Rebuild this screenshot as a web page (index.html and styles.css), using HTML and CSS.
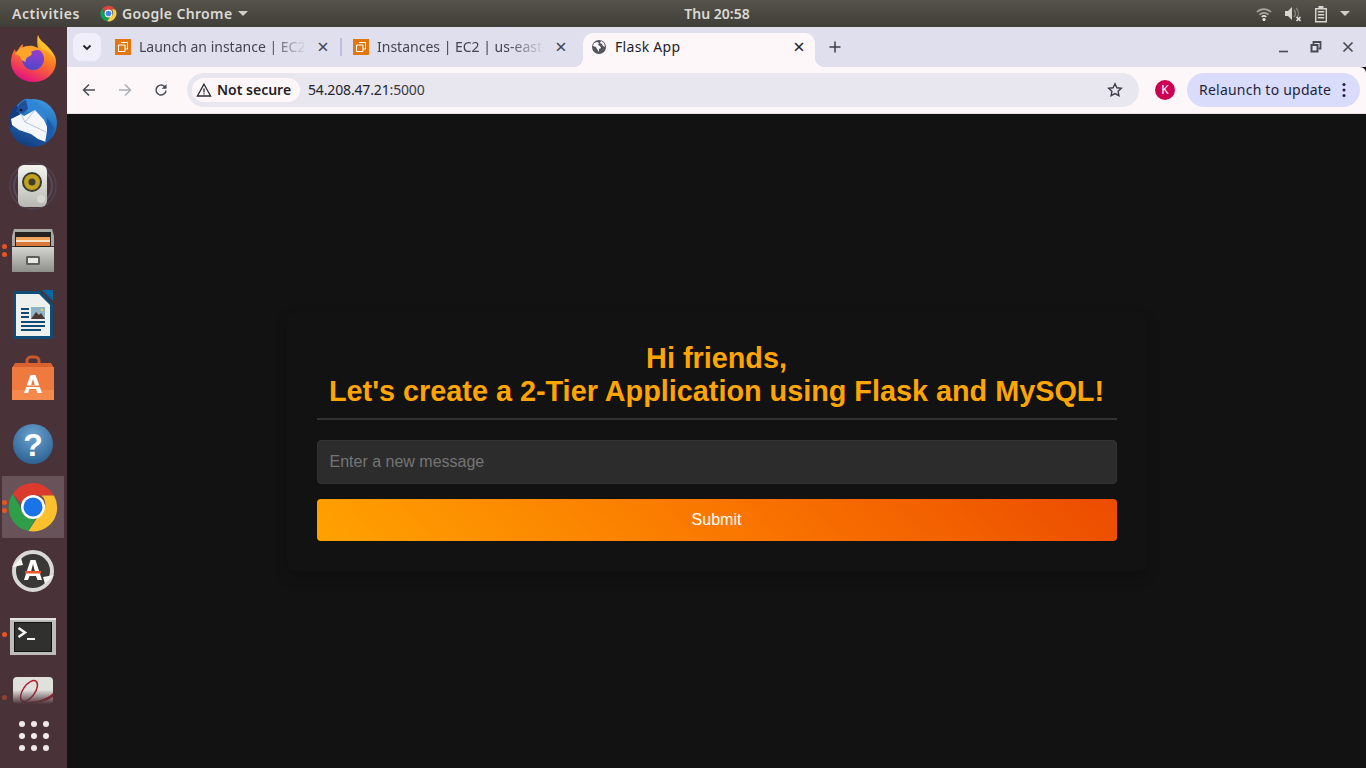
FILE: index.html
```html
<!DOCTYPE html>
<html lang="en">
<head>
    <meta charset="UTF-8">
    <title>Flask App</title>
    <link rel="stylesheet" href="styles.css">
</head>
<body>
<header class="topbar">
    <div class="topbar-left">
        <span class="activities">Activities</span>
        <span class="app-menu">
            <svg class="app-icon" viewBox="0 0 48 48" width="17" height="17">
                <path fill="#db4437" d="M24 2a22 22 0 0 1 19 11H24a11 11 0 0 0-10.500 7.500L6.500 10A22 22 0 0 1 24 2z"/>
                <path fill="#0f9d58" d="M6.500 10l9.500 19a11 11 0 0 0 11 5.500L20 46A22 22 0 0 1 6.500 10z"/>
                <path fill="#ffcd40" d="M43 13a22 22 0 0 1-23 33l9-13a11 11 0 0 0 3-20z"/>
                <circle cx="24" cy="24" r="11" fill="#fff"/>
                <circle cx="24" cy="24" r="8" fill="#4285f4"/>
            </svg>
            <span class="app-name">Google Chrome</span>
            <i class="caret"></i>
        </span>
    </div>
    <div class="clock">Thu 20:58</div>
    <div class="tray">
        <svg viewBox="0 0 16 16" width="16" height="16"><path fill="none" stroke="#a8a69f" stroke-width="1.700" d="M1 6a10 10 0 0 1 14 0M3.500 8.700a6.500 6.500 0 0 1 9 0"/><path fill="none" stroke="#e0ded8" stroke-width="1.700" d="M5.800 11a3.200 3.200 0 0 1 4.400 0"/><circle cx="8" cy="13.500" r="1.600" fill="#e8e6e0"/></svg>
        <svg viewBox="0 0 18 16" width="18" height="16"><path fill="#d8d6d0" d="M1 5h3l4-4v13l-4-4H1z"/><path fill="none" stroke="#8c8a84" stroke-width="1.200" d="M10 4a5 5 0 0 1 0 7M12 2a8 8 0 0 1 1 10"/><path stroke="#e8e6e0" stroke-width="1.500" d="M12.500 11l4 4m0-4l-4 4"/></svg>
        <svg viewBox="0 0 14 18" width="14" height="18"><path fill="none" stroke="#d8d6d0" stroke-width="1.400" d="M1.700 3.700h10.600v13H1.700z"/><path fill="#d8d6d0" d="M4.500 1h5v2.500h-5zM3.800 6h6.400v1.500H3.800zM3.800 9h6.400v1.500H3.800zM3.800 12h6.400v1.500H3.800z"/></svg>
        <i class="caret"></i>
    </div>
</header>

<div class="desktop">
    <nav class="dock">
        <div class="dock-item">
            <svg viewBox="0 0 67 62" width="67" height="62">
                <defs>
                    <linearGradient id="ffBody" x1="0.800" y1="0.100" x2="0.400" y2="1">
                        <stop offset="0" stop-color="#ffc82c"/>
                        <stop offset="0.450" stop-color="#ff7a22"/>
                        <stop offset="1" stop-color="#e5137f"/>
                    </linearGradient>
                    <linearGradient id="ffGlobe" x1="0.600" y1="0" x2="0.400" y2="1">
                        <stop offset="0" stop-color="#a03ccc"/>
                        <stop offset="1" stop-color="#4c47c8"/>
                    </linearGradient>
                </defs>
                <path fill="url(#ffBody)" d="M38 8c1 5 5 7 9 11 5 5 9 10 9 16a22.500 20 0 0 1-45 0c0-5 1-9 4-13 0 2 1 3 2 4 1-4 3-7 6-9-1 3 0 5 2 6 4-3 9-3 13-1-1-5-1-10 0-14z"/>
                <path fill="#ffc02a" d="M38 8c1 5 5 7 9 11 5 5 8 10 9 15-3-6-8-10-14-12-3-4-5-9-4-14z"/>
                <circle cx="33" cy="32" r="11" fill="url(#ffGlobe)"/>
                <path fill="#ffa42b" d="M15 27c3-6 11-9 18-8 4 1 7 3 9 5-4-2-8-1-11 1 2 2 0 4-3 5-2 1-3 3-2 5-4-1-6-3-6-6-1 0-3-1-5-2z"/>
            </svg>
        </div>
        <div class="dock-item">
            <svg viewBox="0 0 67 62" width="67" height="62">
                <defs>
                    <linearGradient id="tbBlue" x1="0.700" y1="0" x2="0.300" y2="1">
                        <stop offset="0" stop-color="#3a98e0"/>
                        <stop offset="1" stop-color="#103a80"/>
                    </linearGradient>
                </defs>
                <circle cx="33" cy="32" r="24" fill="url(#tbBlue)"/>
                <path fill="#123c84" d="M9 32c0-8 3-14 8-18l3 12-10 12z"/>
                <path fill="#2f86d8" d="M18 15c2-5 7-8 11-7 6 1 11 6 14 12 3 5 4 10 3 14l-10-9-9-5z"/>
                <path fill="#1f4f9c" d="M18 16c1-3 4-6 8-7l2 9-5 4-7-1z"/>
                <circle cx="21" cy="19" r="1.300" fill="#111"/>
                <path fill="#f6f7fa" d="M11 28l10-5 3 2 11-6 9 10 5 11-3 11-8-3-7-5-12-4-7-5z"/>
                <path fill="none" stroke="#b8c4d8" stroke-width="1" d="M21 23l4 8 10-12M25 31l21 10"/>
                <path fill="#1a5db0" d="M47 27c3 3 6 7 7 11-1 6-5 11-9 14l2-12z"/>
            </svg>
        </div>
        <div class="dock-item">
            <svg viewBox="0 0 67 62" width="67" height="62">
                <defs>
                    <linearGradient id="rbBox" x1="0" y1="0" x2="0" y2="1">
                        <stop offset="0" stop-color="#f4f4f0"/>
                        <stop offset="1" stop-color="#b8b8b2"/>
                    </linearGradient>
                </defs>
                <circle cx="33" cy="31" r="23" fill="none" stroke="#5d6680" stroke-width="1.500" opacity="0.300"/>
                <circle cx="33" cy="31" r="19" fill="none" stroke="#5d6680" stroke-width="2" opacity="0.500"/>
                <rect x="18" y="10" width="29" height="42" rx="6" fill="url(#rbBox)"/>
                <circle cx="32" cy="27" r="10" fill="#3a3a34"/>
                <circle cx="32" cy="27" r="8" fill="#c0a21e"/>
                <circle cx="32" cy="27" r="3.500" fill="#3f3d30"/>
                <circle cx="41" cy="44" r="4" fill="#d8d8d2"/>
                <circle cx="26" cy="44" r="1.500" fill="#c4c4be"/>
            </svg>
        </div>
        <div class="dock-item">
            <svg viewBox="0 0 67 62" width="67" height="62">
                <defs>
                    <linearGradient id="fcBox" x1="0" y1="0" x2="0" y2="1">
                        <stop offset="0" stop-color="#d4d4d0"/>
                        <stop offset="1" stop-color="#8e8e8a"/>
                    </linearGradient>
                </defs>
                <path fill="#a8a8a4" d="M14 9h38l2 7v10H12V16z"/>
                <rect x="15" y="12" width="36" height="17" fill="#25221f"/>
                <rect x="16" y="17" width="34" height="3" fill="#f2a45e"/>
                <rect x="16" y="20" width="34" height="2" fill="#f7e3c8"/>
                <rect x="16" y="22" width="34" height="4" fill="#d87a3c"/>
                <rect x="12" y="27" width="42" height="25" fill="url(#fcBox)"/>
                <rect x="26" y="36" width="14" height="9" rx="1.500" fill="#5d5d5a"/>
                <rect x="28" y="38" width="10" height="5" fill="#e8e8e4"/>
            </svg>
        </div>
        <div class="dock-item">
            <svg viewBox="0 0 67 62" width="67" height="62">
                <path fill="#0f4c75" d="M15 7h25l13 13v33a2 2 0 0 1-2 2H15a2 2 0 0 1-2-2V9a2 2 0 0 1 2-2z"/>
                <path fill="#0369a3" d="M42 6h11v11z"/>
                <path fill="#eef0ee" d="M16 10h23l11 11v31H16z"/>
                <path fill="#0f4c75" d="M21 24h8v2h-8zM21 28h8v2h-8zM21 32h8v2h-8zM21 37h24v2H21zM21 41h24v2H21zM21 45h20v2H21z"/>
                <rect x="31" y="23" width="14" height="12" fill="#8fb4c8"/>
                <path fill="#4a3a32" d="M31 35l5-7 3 3 2-2 4 6z"/>
                <circle cx="42" cy="26" r="1.300" fill="#f2d04a"/>
            </svg>
        </div>
        <div class="dock-item">
            <svg viewBox="0 0 67 62" width="67" height="62">
                <path fill="none" stroke="#c9582c" stroke-width="3" d="M27 19v-6a4 4 0 0 1 4-4h4a4 4 0 0 1 4 4v6"/>
                <path fill="#d9622f" d="M15 15h36l3 5H12z"/>
                <rect x="12" y="19" width="42" height="23" fill="#ef7a3f"/>
                <rect x="12" y="42" width="42" height="10" fill="#f68a4c"/>
                <path fill="#fff" d="M30.500 27h5l6.500 18h-4.500l-1.500-4h-6.500l-1.500 4H24zm2.500 4l-1.800 6h3.600z"/>
                <rect x="24" y="37.500" width="18" height="1.500" fill="#ef7a3f"/>
            </svg>
        </div>
        <div class="dock-item">
            <svg viewBox="0 0 67 62" width="67" height="62">
                <defs>
                    <radialGradient id="helpBall" cx="0.500" cy="0.300" r="0.800">
                        <stop offset="0" stop-color="#6da3d0"/>
                        <stop offset="1" stop-color="#245a8c"/>
                    </radialGradient>
                </defs>
                <circle cx="33" cy="32" r="20" fill="url(#helpBall)"/>
                <text class="help-mark" x="33" y="44" text-anchor="middle">?</text>
            </svg>
        </div>
        <div class="dock-item active">
            <svg viewBox="0 0 67 62" width="67" height="62">
                <path fill="#db3a2f" d="M33 7a24 24 0 0 1 21 12.500H33a11.500 11.500 0 0 0-11 8.500L12.700 18A24 24 0 0 1 33 7z"/>
                <path fill="#2f9e48" d="M12.700 18l10.600 18a11.500 11.500 0 0 0 12 6.800L28.500 55A24 24 0 0 1 12.700 18z"/>
                <path fill="#fbc02d" d="M54 19.500A24 24 0 0 1 28.500 55l11-17a11.500 11.500 0 0 0 2-18.500z"/>
                <circle cx="33" cy="31" r="12" fill="#fff"/>
                <circle cx="33" cy="31" r="9.500" fill="#1a73e8"/>
            </svg>
        </div>
        <div class="dock-item">
            <svg viewBox="0 0 67 62" width="67" height="62">
                <circle cx="33" cy="30" r="19" fill="#3a3836" stroke="#d8d8d4" stroke-width="4"/>
                <path fill="#f4f4f0" d="M12 26l9-9 2 7zM54 34l-9 9-2-7z"/>
                <path fill="#fff" d="M30.500 19h5l6.500 20h-4.500l-1.500-4h-6.500l-1.500 4H24zm2.500 4l-1.800 7h3.600z"/>
                <rect x="25" y="30" width="16" height="2.500" fill="#e8552a"/>
            </svg>
        </div>
        <div class="dock-item">
            <svg viewBox="0 0 67 62" width="67" height="62">
                <rect x="10" y="13" width="46" height="37" fill="#bcbcb8"/>
                <rect x="10" y="13" width="46" height="2" fill="#e4e4e0"/>
                <rect x="14" y="17" width="38" height="30" fill="#111"/>
                <rect x="15" y="18" width="36" height="28" fill="#30302e"/>
                <path fill="none" stroke="#f2f2f0" stroke-width="2.500" d="M18.500 23l6.500 4.500-6.500 4.500"/>
                <rect x="27" y="33" width="8" height="2" fill="#f2f2f0"/>
            </svg>
        </div>
        <div class="dock-item dock-fade">
            <svg viewBox="0 0 67 35" width="67" height="35">
                <rect x="13" y="8" width="40" height="27" rx="4" fill="#e0e0dc"/>
                <ellipse cx="29" cy="22" rx="6" ry="12" transform="rotate(35 29 22)" fill="none" stroke="#b3202c" stroke-width="1.500"/>
                <path fill="#b3202c" d="M21 33c12 1 25-2 32-9v4c-7 5-18 7-32 6z"/>
            </svg>
        </div>
        <div class="dock-apps">
            <i></i><i></i><i></i><i></i><i></i><i></i><i></i><i></i><i></i>
        </div>
        <b class="run-dot dot-files1"></b>
        <b class="run-dot dot-files2"></b>
        <b class="run-dot dot-chrome1"></b>
        <b class="run-dot dot-chrome2"></b>
        <b class="run-dot dot-term"></b>
        <b class="run-dot dot-last"></b>
    </nav>

    <main class="browser">
        <div class="tabstrip">
            <button class="tab-search">
                <svg viewBox="0 0 12 12" width="12" height="12"><path fill="none" stroke="#1f1f28" stroke-width="1.800" d="M2.500 4.500L6 8l3.500-3.500"/></svg>
            </button>
            <div class="tab">
                <svg class="aws" viewBox="0 0 16 16" width="16" height="16"><rect width="16" height="16" fill="#e2760f"/><path fill="none" stroke="#fff" stroke-width="1" d="M6 3.500h6.500V10H10M3.500 6H10v6.500H3.500z"/></svg>
                <span class="tab-title">Launch an instance | EC2</span>
                <span class="tab-x">×</span>
            </div>
            <i class="tab-sep"></i>
            <div class="tab">
                <svg class="aws" viewBox="0 0 16 16" width="16" height="16"><rect width="16" height="16" fill="#e2760f"/><path fill="none" stroke="#fff" stroke-width="1" d="M6 3.500h6.500V10H10M3.500 6H10v6.500H3.500z"/></svg>
                <span class="tab-title">Instances | EC2 | us-east-</span>
                <span class="tab-x">×</span>
            </div>
            <div class="tab tab-active">
                <svg viewBox="0 0 16 16" width="16" height="16"><circle cx="8" cy="8" r="7" fill="#55555e"/><path fill="#fdf7fa" d="M3 4l3-1 2 1-1 2 2 1 1 2-2 1v3L6 10 5 8 2 7zM10 2l3 2 1 4-2-1-1-2-2-1z"/></svg>
                <span class="tab-title">Flask App</span>
                <span class="tab-x">×</span>
            </div>
            <span class="tab-new">
                <svg viewBox="0 0 12 12" width="12" height="12"><path stroke="#3c3c46" stroke-width="1.500" d="M6 0.500v11M0.500 6h11"/></svg>
            </span>
            <div class="win-controls">
                <svg viewBox="0 0 12 12" width="12" height="12"><path stroke="#4a4a52" stroke-width="1.600" d="M1 10.500h9"/></svg>
                <svg viewBox="0 0 12 12" width="12" height="12"><path fill="none" stroke="#4a4a52" stroke-width="1.800" d="M3.500 3V1h7v6.500H8.500"/><path fill="none" stroke="#4a4a52" stroke-width="2" d="M1.500 4h6v6.500h-6z"/></svg>
                <svg viewBox="0 0 12 12" width="12" height="12"><path stroke="#4a4a52" stroke-width="1.700" d="M1.500 1.500l9 9m0-9l-9 9"/></svg>
            </div>
        </div>

        <div class="toolbar">
            <svg class="nav-icon" viewBox="0 0 16 16" width="16" height="16"><path fill="none" stroke="#4a4a52" stroke-width="1.500" d="M14 8H2.500M8 2.500L2.500 8 8 13.500"/></svg>
            <svg class="nav-icon" viewBox="0 0 16 16" width="16" height="16"><path fill="none" stroke="#adadb2" stroke-width="1.500" d="M2 8h11.500M8 2.500L13.500 8 8 13.500"/></svg>
            <svg class="nav-icon" viewBox="0 0 16 16" width="16" height="16"><path fill="none" stroke="#4a4a52" stroke-width="1.500" d="M13 8.500A5 5 0 1 1 11.500 4.500L13 6"/><path fill="#4a4a52" d="M13.500 2v4.800H8.700z"/></svg>
            <div class="omnibox">
                <div class="chip">
                    <svg viewBox="0 0 16 16" width="16" height="16"><path fill="none" stroke="#2a2a30" stroke-width="1.300" d="M8 2.200L14.600 14H1.400z"/><path stroke="#2a2a30" stroke-width="1.300" d="M8 6.500v4M8 11.300v1.300"/></svg>
                    <span class="chip-text">Not secure</span>
                </div>
                <span class="url">54.208.47.21<span class="url-port">:5000</span></span>
                <svg class="star" viewBox="0 0 16 16" width="16" height="16"><path fill="none" stroke="#3c3c46" stroke-width="1.400" d="M8 1.800l1.900 4 4.400.5-3.200 3 .8 4.400L8 11.600l-3.900 2.100.8-4.400-3.200-3 4.400-.5z"/></svg>
            </div>
            <span class="avatar">K</span>
            <div class="relaunch">
                <span class="relaunch-text">Relaunch to update</span>
                <svg viewBox="0 0 4 16" width="4" height="16"><circle cx="2" cy="2.500" r="1.500" fill="#1f1f3a"/><circle cx="2" cy="8" r="1.500" fill="#1f1f3a"/><circle cx="2" cy="13.500" r="1.500" fill="#1f1f3a"/></svg>
            </div>
        </div>

        <div class="page">
            <div class="card">
                <h1>Hi friends,<br>Let's create a 2-Tier Application using Flask and MySQL!</h1>
                <form class="msg-form">
                    <input type="text" placeholder="Enter a new message">
                    <button type="button">Submit</button>
                </form>
            </div>
        </div>
    </main>
</div>
</body>
</html>
```

FILE: styles.css
```css
* {
    box-sizing: border-box;
}
html, body {
    margin: 0;
    height: 768px;
    overflow: hidden;
}
body {
    font-family: "Noto Sans", sans-serif;
    background-color: #121212;
}
.caret {
    display: inline-block;
    width: 0;
    height: 0;
    border-left: 5px solid transparent;
    border-right: 5px solid transparent;
    border-top: 5px solid #d0cec8;
}

/* ubuntu top bar */
.topbar {
    height: 27px;
    background: linear-gradient(#56534b, #3f3e38);
    color: #dcdad4;
    font-size: 14px;
    font-weight: 600;
    display: flex;
    align-items: center;
    justify-content: space-between;
    padding: 0 16px 0 12px;
    position: relative;
}
.topbar-left {
    display: flex;
    align-items: center;
    gap: 20px;
}
.activities {
    letter-spacing: 0.55px;
}
.app-menu {
    display: flex;
    align-items: center;
    gap: 5px;
}
.app-name {
    letter-spacing: 0.35px;
}
.app-menu .caret {
    margin-left: 1px;
}
.clock {
    position: absolute;
    left: 0;
    width: 1434px;
    text-align: center;
}
.tray {
    display: flex;
    align-items: center;
    gap: 12px;
}

.desktop {
    display: flex;
    height: 741px;
}

/* dock */
.dock {
    width: 67px;
    flex-shrink: 0;
    background-color: #4a3239;
    display: flex;
    flex-direction: column;
    overflow: hidden;
    position: relative;
}
.dock-item {
    height: 64.2px;
    flex-shrink: 0;
}
.dock-item svg {
    display: block;
}
.dock-item.active svg {
    background: linear-gradient(to right, transparent 2px, rgba(255, 255, 255, 0.16) 2px, rgba(255, 255, 255, 0.16) 64px, transparent 64px);
    border-radius: 4px;
}
.help-mark {
    font-family: "Liberation Sans", sans-serif;
    font-size: 32px;
    font-weight: bold;
    fill: #fff;
}
.dock-fade {
    height: 35px;
    -webkit-mask-image: linear-gradient(#000 60%, transparent);
    mask-image: linear-gradient(#000 60%, transparent);
}
.dock-apps {
    height: 64px;
    padding: 16px 19px;
    display: grid;
    grid-template-columns: repeat(3, 6px);
    gap: 6px;
    justify-content: center;
    align-content: center;
}
.dock-apps i {
    width: 6px;
    height: 6px;
    border-radius: 50%;
    background-color: #eeeaec;
}
.run-dot {
    position: absolute;
    left: 2px;
    width: 5px;
    height: 5px;
    border-radius: 50%;
    background-color: #e95420;
}
.dot-files1 { top: 217px; }
.dot-files2 { top: 225px; }
.dot-chrome1 { top: 473px; }
.dot-chrome2 { top: 481px; }
.dot-term { top: 605px; }
.dot-last { top: 668px; opacity: 0.45; }

/* chrome */
.browser {
    flex: 1;
    display: flex;
    flex-direction: column;
    min-width: 0;
}
.tabstrip {
    height: 40px;
    background-color: #e0dfee;
    display: flex;
    align-items: flex-end;
    padding-left: 6px;
    font-size: 14px;
    color: #45454f;
}
.tab-search {
    width: 28px;
    height: 28px;
    margin-bottom: 6px;
    margin-right: 6px;
    padding: 0;
    border: none;
    border-radius: 8px;
    background-color: #f0eefb;
    display: flex;
    align-items: center;
    justify-content: center;
}
.tab {
    width: 232px;
    height: 34px;
    padding: 0 8px 6px;
    display: flex;
    align-items: center;
    gap: 8px;
    margin-right: 6px;
    flex-shrink: 0;
}
.tab svg {
    flex-shrink: 0;
}
.tab-sep {
    width: 2px;
    height: 18px;
    background-color: #bcc0dc;
    margin: 0 3px 11px -5px;
    flex-shrink: 0;
}
.tab-title {
    flex: 1;
    min-width: 0;
    white-space: nowrap;
    line-height: 16px;
    margin-top: -1px;
    -webkit-mask-image: linear-gradient(to right, #000 78%, transparent 100%);
    mask-image: linear-gradient(to right, #000 78%, transparent 100%);
}
.tab-x {
    width: 16px;
    text-align: center;
    font-size: 20px;
    line-height: 16px;
    color: #45454f;
}
.tab-active {
    background-color: #fdf7fa;
    border-radius: 10px 10px 0 0;
    color: #1f1f28;
    position: relative;
    margin-right: 0;
}
.tab-active .tab-x {
    color: #1f1f28;
}
.tab-active .tab-title {
    -webkit-mask-image: none;
    mask-image: none;
    letter-spacing: 0.3px;
}
.tab-active::before,
.tab-active::after {
    content: "";
    position: absolute;
    bottom: 0;
    width: 10px;
    height: 10px;
}
.tab-active::before {
    left: -10px;
    background: radial-gradient(circle at 0 0, transparent 10px, #fdf7fa 10.500px);
}
.tab-active::after {
    right: -10px;
    background: radial-gradient(circle at 100% 0, transparent 10px, #fdf7fa 10.500px);
}
.tab-new {
    margin: 0 0 14px 14px;
    display: flex;
}
.win-controls {
    margin-left: auto;
    margin-bottom: 14px;
    padding-right: 12px;
    display: flex;
    gap: 20px;
}
.toolbar {
    height: 47px;
    background-color: #fdf7fa;
    border-radius: 0 6px 0 0;
    border-bottom: 1px solid #e4e0e6;
    display: flex;
    align-items: center;
    padding: 0 6px 0 14px;
}
.nav-icon {
    margin-right: 20px;
}
.nav-icon:nth-child(3) {
    margin-right: 18px;
}
.omnibox {
    width: 952px;
    height: 34px;
    border-radius: 17px;
    background-color: #e8e6ee;
    display: flex;
    align-items: center;
    padding: 0 16px 0 5px;
    font-size: 14px;
    color: #24242c;
}
.chip {
    height: 24px;
    width: 108px;
    flex-shrink: 0;
    border-radius: 12px;
    background-color: #fdf7fa;
    display: flex;
    align-items: center;
    gap: 5px;
    padding-left: 4px;
    font-weight: 600;
    color: #1f1f28;
}
.chip-text {
    margin-top: -2px;
}
.url {
    margin: -2px 0 0 8px;
    letter-spacing: -0.15px;
}
.url-port {
    color: #3c3c44;
}
.star {
    margin-left: auto;
}
.avatar {
    width: 20px;
    height: 20px;
    margin-left: 16px;
    border-radius: 50%;
    background-color: #cc0052;
    color: #fff;
    font-size: 12px;
    line-height: 20px;
    text-align: center;
    flex-shrink: 0;
}
.relaunch {
    margin-left: 12px;
    width: 173px;
    height: 34px;
    border-radius: 17px;
    background-color: #d9dcfb;
    color: #1f1f3a;
    font-size: 14px;
    display: flex;
    align-items: center;
    justify-content: space-between;
    padding: 0 14px 0 12px;
    white-space: nowrap;
}
.relaunch-text {
    letter-spacing: 0.22px;
    margin-top: -2px;
}

/* the flask page itself */
.page {
    flex: 1;
    background-color: #121212;
    display: flex;
    align-items: center;
    justify-content: center;
    font-family: "Liberation Sans", Arial, sans-serif;
}
.card {
    width: 860px;
    padding: 30px;
    background-color: #121212;
    border-radius: 8px;
    box-shadow: 0 6px 14px rgba(0, 0, 0, 0.18);
}
.card h1 {
    margin: 0 0 20px;
    padding-bottom: 10px;
    border-bottom: 2px solid #333;
    color: #ffa500;
    font-size: 28.8px;
    line-height: 33px;
    font-weight: bold;
    text-align: center;
}
.msg-form {
    display: flex;
    flex-direction: column;
    gap: 15px;
}
.msg-form input {
    height: 44px;
    padding: 12px;
    background-color: #2c2c2c;
    border: 1px solid #333;
    border-radius: 4px;
    font-family: inherit;
    font-size: 16px;
    color: #fff;
}
.msg-form input::placeholder {
    color: #757575;
}
.msg-form button {
    height: 42px;
    border: none;
    border-radius: 4px;
    background: linear-gradient(45deg, #ffa200, #f97300 55%, #ec4c00);
    color: #fff;
    font-family: inherit;
    font-size: 16px;
}
```
